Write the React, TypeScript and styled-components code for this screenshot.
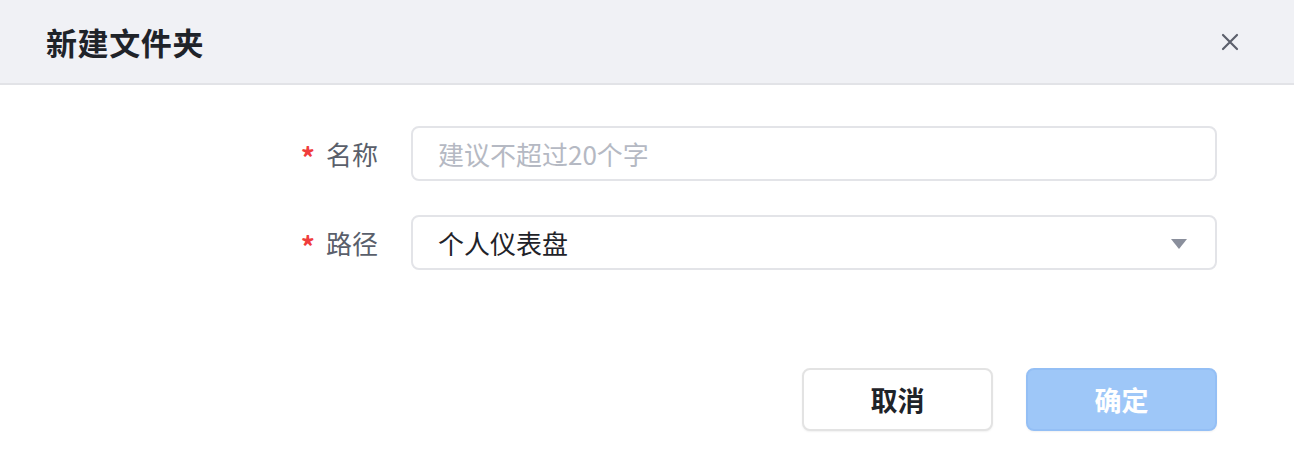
import React from "react";
import styled, { createGlobalStyle } from "styled-components";

const GlobalStyle = createGlobalStyle`
  html, body {
    margin: 0;
    padding: 0;
    background: #fff;
  }
  body {
    font-family: "Noto Sans CJK SC", "Noto Sans", sans-serif;
  }
  * {
    box-sizing: border-box;
  }
`;

const Dialog = styled.div`
  width: 1294px;
  height: 472px;
  background: #fff;
  display: flex;
  flex-direction: column;
`;

const Header = styled.header`
  height: 85px;
  background: #f0f1f5;
  border-bottom: 2px solid #e2e3e7;
  display: flex;
  align-items: center;
  justify-content: space-between;
  padding: 0 52px 0 46px;
`;

const Title = styled.h2`
  margin: 0;
  font-size: 31px;
  font-weight: 700;
  color: #1f2329;
  letter-spacing: 0.6px;
`;

const CloseButton = styled.button`
  width: 24px;
  height: 24px;
  padding: 0;
  border: none;
  background: transparent;
  display: flex;
  align-items: center;
  justify-content: center;
  cursor: pointer;
`;

const Form = styled.div`
  display: grid;
  grid-template-columns: 411px 806px;
  row-gap: 34px;
  padding-top: 41px;
`;

const Label = styled.label`
  display: flex;
  align-items: center;
  justify-content: flex-end;
  padding-right: 33px;
  font-size: 26px;
  color: #5a5f6b;
`;

const Star = styled.span`
  color: #f03d3d;
  margin-right: 11px;
  font-size: 28px;
  font-weight: 700;
  position: relative;
  top: 3px;
`;

const Field = styled.div`
  height: 55px;
  border: 2px solid #e3e4e8;
  border-radius: 8px;
  display: flex;
  align-items: center;
  justify-content: space-between;
  padding: 0 28px 0 25px;
  font-size: 26px;
`;

const Input = styled.input`
  flex: 1;
  border: none;
  outline: none;
  background: transparent;
  font: inherit;
  color: #1f2329;
  padding: 0;

  &::placeholder {
    color: #b5b9c3;
  }
`;

const SelectValue = styled.span`
  color: #1f2329;
`;

const Caret = styled.span`
  width: 0;
  height: 0;
  border-left: 8px solid transparent;
  border-right: 8px solid transparent;
  border-top: 10px solid #8a8f9c;
  margin-top: 3px;
`;

const Footer = styled.div`
  display: flex;
  justify-content: flex-end;
  gap: 33px;
  padding: 98px 77px 0 0;
`;

const Button = styled.button<{ $primary?: boolean }>`
  width: 191px;
  height: 63px;
  border-radius: 8px;
  font-family: inherit;
  font-size: 27px;
  font-weight: 700;
  cursor: pointer;
  border: 2px solid ${(p) => (p.$primary ? "#94bff5" : "#e3e3e3")};
  background: ${(p) => (p.$primary ? "#9ec7f8" : "#fff")};
  color: ${(p) => (p.$primary ? "#fff" : "#1f2329")};
  box-shadow: 0 1px 2px rgba(0, 0, 0, 0.06);
`;

export default function App() {
  return (
    <>
      <GlobalStyle />
      <Dialog>
        <Header>
          <Title>新建文件夹</Title>
          <CloseButton aria-label="关闭">
            <svg width="18" height="18" viewBox="0 0 18 18">
              <path
                d="M2 2L16 16M16 2L2 16"
                stroke="#5c606c"
                strokeWidth="2.2"
                strokeLinecap="round"
              />
            </svg>
          </CloseButton>
        </Header>

        <Form>
          <Label>
            <Star>*</Star>名称
          </Label>
          <Field>
            <Input placeholder="建议不超过20个字" />
          </Field>

          <Label>
            <Star>*</Star>路径
          </Label>
          <Field>
            <SelectValue>个人仪表盘</SelectValue>
            <Caret />
          </Field>
        </Form>

        <Footer>
          <Button>取消</Button>
          <Button $primary>确定</Button>
        </Footer>
      </Dialog>
    </>
  );
}
